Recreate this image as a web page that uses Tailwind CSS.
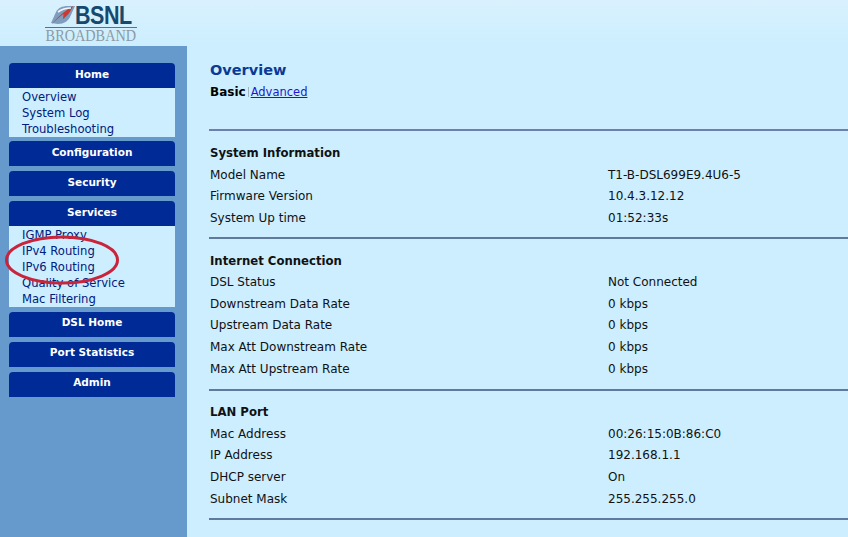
<!DOCTYPE html>
<html>
<head>
<meta charset="utf-8">
<script src="https://cdn.jsdelivr.net/npm/@tailwindcss/browser@4"></script>
</head>
<body class="bg-[#cceeff] h-[537px] overflow-hidden font-['DejaVu_Sans',sans-serif] text-[12px] text-[#111]">
<div class="flex flex-col h-[537px] relative">
  <header class="h-[46px] flex shrink-0 pl-[45px] bg-gradient-to-b from-[#d9f1fd] to-[#cceeff]">
    <div class="w-[92px] flex flex-col items-center pt-[3px]">
      <div class="flex items-center justify-center h-[24px] gap-[1px] w-full">
        <svg width="26" height="20" viewBox="0 0 26 20">
          <path d="M1 18 L6 7 C8 3 12 1 18 1 L25 1 L20 12 C18 16 14 19 8 19 Z" fill="#7f9dbd"/>
          <path d="M2 19 C7 13 13 7 23 1 C20 8 16 12 13 14 L13.5 9 C9 12 6 15 2 19Z" fill="#c93a35"/>
          <path d="M8 7 C12 4 16 3 21 3" stroke="#f0f8fc" stroke-width="1.6" fill="none"/>
        </svg>
        <span class="-ml-[2px] font-['Liberation_Sans',sans-serif] font-bold text-[25px] leading-none text-[#17496d] tracking-[-0.5px] scale-x-[0.86] origin-left w-[58px]">BSNL</span>
      </div>
      <div class="w-full h-[1px] bg-[#a5534f] shrink-0"></div>
      <div class="font-['Liberation_Serif',serif] text-[17px] leading-[15px] text-[#8c9aa3] whitespace-nowrap scale-x-[0.84]">BROADBAND</div>
    </div>
  </header>
  <div class="flex flex-1 min-h-0">
    <aside class="w-[187px] shrink-0 bg-[#6699cc] pt-[17px] pl-[9px] pr-[12px] flex flex-col gap-[5px] font-bold text-white text-center text-[10.5px]">
      <div class="flex flex-col -mb-[1px]">
        <div class="h-[25px] bg-[#002b96] rounded-t-[4px] pt-[5px] leading-[13px]">Home</div>
        <ul class="h-[49px] bg-[#cceeff] pl-[13px] pt-[1px] font-normal text-[11.6px] text-left text-[#00207c] leading-[16px]">
          <li>Overview</li><li>System Log</li><li>Troubleshooting</li>
        </ul>
      </div>
      <div class="h-[25px] bg-[#002b96] rounded-t-[4px] pt-[5px] leading-[13px]">Configuration</div>
      <div class="h-[25px] bg-[#002b96] rounded-t-[4px] pt-[5px] leading-[13px]">Security</div>
      <div class="flex flex-col">
        <div class="h-[25px] bg-[#002b96] rounded-t-[4px] pt-[5px] leading-[13px]">Services</div>
        <ul class="h-[81px] bg-[#cceeff] pl-[13px] pt-[1px] font-normal text-[11.6px] text-left text-[#00207c] leading-[16px]">
          <li>IGMP Proxy</li><li>IPv4 Routing</li><li>IPv6 Routing</li><li>Quality of Service</li><li>Mac Filtering</li>
        </ul>
      </div>
      <div class="h-[25px] bg-[#002b96] rounded-t-[4px] pt-[4px] leading-[13px]">DSL Home</div>
      <div class="h-[25px] bg-[#002b96] rounded-t-[4px] pt-[4px] leading-[13px]">Port Statistics</div>
      <div class="h-[25px] bg-[#002b96] rounded-t-[4px] pt-[4px] leading-[13px]">Admin</div>
    </aside>
    <main class="flex-1 pl-[22px] pt-[15px] min-w-0">
      <h1 class="pl-[1px] text-[14.5px] leading-[19px] font-bold text-[#0a3a96]">Overview</h1>
      <div class="pl-[1px] flex items-center mt-[4px] h-[16px] text-[12px]">
        <b class="text-black">Basic</b>
        <span class="mx-[2px] w-[1px] h-[10px] bg-[#9db4c0]"></span>
        <a class="text-[#1a1acc] underline text-[11.5px] mt-[1px]">Advanced</a>
      </div>
      <hr class="mt-[29px] border-0 h-[2px] bg-[#6c7fae]">
      <section class="pl-[1px] pt-[12px] h-[106px]">
        <h2 class="font-bold leading-[21.5px] text-[11.7px] text-[#111]">System Information</h2>
        <div class="grid grid-cols-[398px_1fr] auto-rows-[21.7px] leading-[21.7px]">
          <div>Model Name</div><div>T1-B-DSL699E9.4U6-5</div>
          <div>Firmware Version</div><div>10.4.3.12.12</div>
          <div>System Up time</div><div>01:52:33s</div>
        </div>
      </section>
      <hr class="border-0 h-[2px] bg-[#5f7a9a]">
      <section class="pl-[1px] pt-[12px] h-[150px]">
        <h2 class="font-bold leading-[21px] text-[11.7px] text-[#111]">Internet Connection</h2>
        <div class="grid grid-cols-[398px_1fr] auto-rows-[21.7px] leading-[21.7px]">
          <div>DSL Status</div><div>Not Connected</div>
          <div>Downstream Data Rate</div><div>0 kbps</div>
          <div>Upstream Data Rate</div><div>0 kbps</div>
          <div>Max Att Downstream Rate</div><div>0 kbps</div>
          <div>Max Att Upstream Rate</div><div>0 kbps</div>
        </div>
      </section>
      <hr class="border-0 h-[2px] bg-[#5f7a9a]">
      <section class="pl-[1px] pt-[11px] h-[127px]">
        <h2 class="font-bold leading-[21.5px] text-[11.7px] text-[#111]">LAN Port</h2>
        <div class="grid grid-cols-[398px_1fr] auto-rows-[21.7px] leading-[21.7px]">
          <div>Mac Address</div><div>00:26:15:0B:86:C0</div>
          <div>IP Address</div><div>192.168.1.1</div>
          <div>DHCP server</div><div>On</div>
          <div>Subnet Mask</div><div>255.255.255.0</div>
        </div>
      </section>
      <hr class="border-0 h-[2px] bg-[#5f7a9a]">
    </main>
  </div>
  <svg class="absolute left-0 top-0 pointer-events-none" width="130" height="290" viewBox="0 0 130 290">
    <ellipse cx="62" cy="260" rx="55.5" ry="23" fill="none" stroke="#c9243a" stroke-width="3"/>
  </svg>
</div>
</body>
</html>
